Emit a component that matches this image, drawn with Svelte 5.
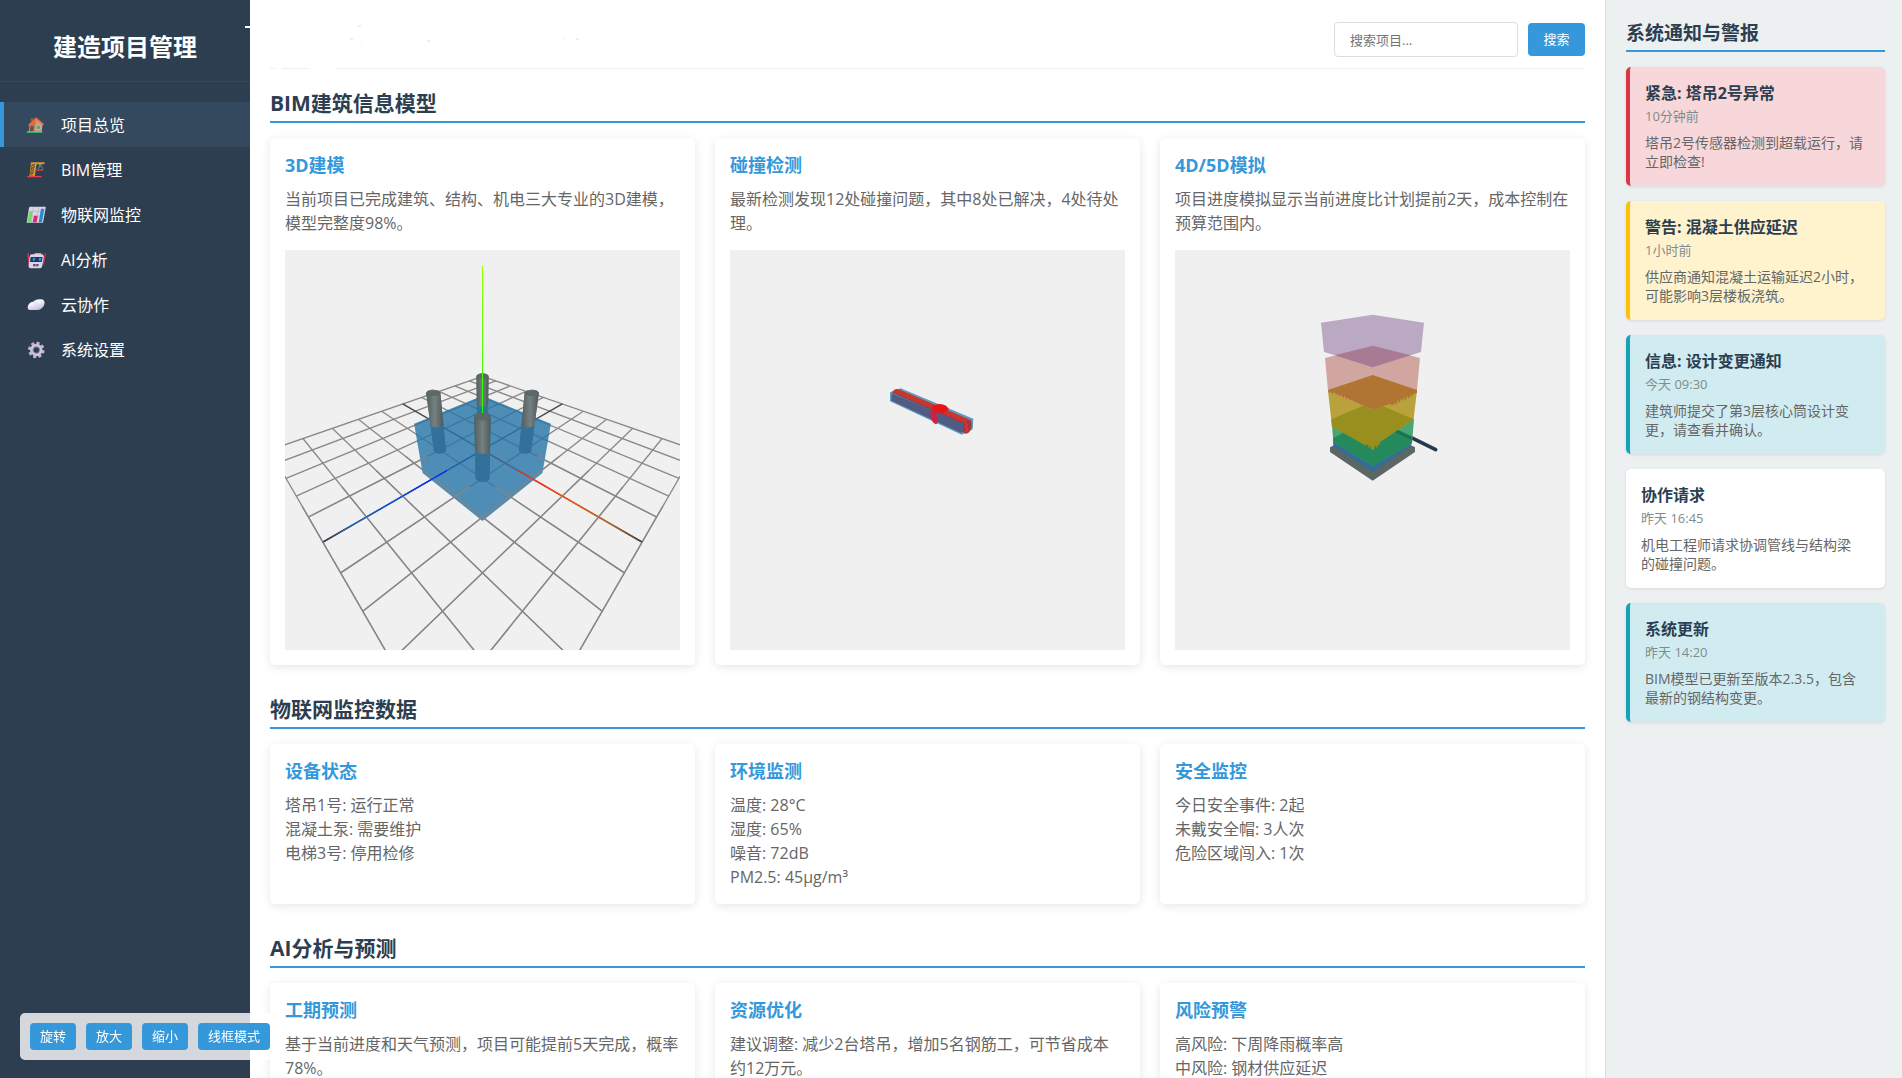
<script>
  const navItems = [
    { id: 'home', label: '项目总览' },
    { id: 'crane', label: 'BIM管理' },
    { id: 'chart', label: '物联网监控' },
    { id: 'robot', label: 'AI分析' },
    { id: 'cloud', label: '云协作' },
    { id: 'gear', label: '系统设置' }
  ];
  let active = $state('home');

  const sections = [
    {
      title: 'BIM建筑信息模型',
      cards: [
        { title: '3D建模', lines: ['当前项目已完成建筑、结构、机电三大专业的3D建模，模型完整度98%。'], view: 'model' },
        { title: '碰撞检测', lines: ['最新检测发现12处碰撞问题，其中8处已解决，4处待处理。'], view: 'clash' },
        { title: '4D/5D模拟', lines: ['项目进度模拟显示当前进度比计划提前2天，成本控制在预算范围内。'], view: 'phases' }
      ]
    },
    {
      title: '物联网监控数据',
      cards: [
        { title: '设备状态', lines: ['塔吊1号: 运行正常', '混凝土泵: 需要维护', '电梯3号: 停用检修'] },
        { title: '环境监测', lines: ['温度: 28°C', '湿度: 65%', '噪音: 72dB', 'PM2.5: 45μg/m³'] },
        { title: '安全监控', lines: ['今日安全事件: 2起', '未戴安全帽: 3人次', '危险区域闯入: 1次'] }
      ]
    },
    {
      title: 'AI分析与预测',
      cards: [
        { title: '工期预测', lines: ['基于当前进度和天气预测，项目可能提前5天完成，概率78%。'] },
        { title: '资源优化', lines: ['建议调整: 减少2台塔吊，增加5名钢筋工，可节省成本约12万元。'] },
        { title: '风险预警', lines: ['高风险: 下周降雨概率高', '中风险: 钢材供应延迟'] }
      ]
    }
  ];

  const notices = [
    { kind: 'urgent', title: '紧急: 塔吊2号异常', time: '10分钟前', text: '塔吊2号传感器检测到超载运行，请立即检查!' },
    { kind: 'warning', title: '警告: 混凝土供应延迟', time: '1小时前', text: '供应商通知混凝土运输延迟2小时，可能影响3层楼板浇筑。' },
    { kind: 'info', title: '信息: 设计变更通知', time: '今天 09:30', text: '建筑师提交了第3层核心筒设计变更，请查看并确认。' },
    { kind: 'plain', title: '协作请求', time: '昨天 16:45', text: '机电工程师请求协调管线与结构梁的碰撞问题。' },
    { kind: 'info', title: '系统更新', time: '昨天 14:20', text: 'BIM模型已更新至版本2.3.5，包含最新的钢结构变更。' }
  ];

  const tools = ['旋转', '放大', '缩小', '线框模式'];

  // Perspective camera at (5,5,5) looking at the origin, 75 degree field of view.
  const focal = 200 / Math.tan((37.5 * Math.PI) / 180);
  function project(x, y, z) {
    const depth = Math.sqrt(75) - (x + y + z) / Math.sqrt(3);
    return [
      197.5 + (((x - z) / Math.SQRT2) * focal) / depth,
      200 - (((2 * y - x - z) / Math.sqrt(6)) * focal) / depth
    ];
  }
  const poly = (...pts) => pts.map((p) => project(...p).map((n) => n.toFixed(1)).join(',')).join(' ');
  function seg(a, b) {
    const [x1, y1] = project(...a);
    const [x2, y2] = project(...b);
    return { x1, y1, x2, y2 };
  }

  const grid = [];
  const frontGrid = [];
  for (let i = -5; i <= 5; i++) {
    const tone = i === 0 ? '#444' : '#888';
    grid.push({ ...seg([i, 0, -5], [i, 0, 5]), tone }, { ...seg([-5, 0, i], [5, 0, i]), tone });
    const from = i > 1.5 ? -1.5 : 1.5;
    if (i !== 0 && i >= -1) {
      frontGrid.push({ ...seg([i, 0, from], [i, 0, 5]), tone }, { ...seg([from, 0, i], [5, 0, i]), tone });
    }
  }

  const s = 1.5;
  const box = poly([-s, 1, -s], [s, 1, -s], [s, -1, -s], [s, -1, s], [-s, -1, s], [-s, 1, s]);

  function column(cx, cz) {
    const ring = (y) =>
      Array.from({ length: 24 }, (_, k) => {
        const t = (k / 24) * Math.PI * 2;
        return [cx + 0.2 * Math.cos(t), y, cz + 0.2 * Math.sin(t)];
      });
    const shape = (y0, y1) => {
      const lo = ring(y0).map((p) => project(...p));
      const hi = ring(y1).map((p) => project(...p));
      const ext = (r, f) => r.reduce((m, p) => (f(p[0], m[0]) ? p : m));
      const lt = (a, b) => a < b;
      const gt = (a, b) => a > b;
      const hl = ext(hi, lt), hr = ext(hi, gt), ll = ext(lo, lt), lr = ext(lo, gt);
      const rx = (lr[0] - ll[0]) / 2;
      const hx = (hr[0] - hl[0]) / 2;
      return `M${hl} A${hx} ${hx * 0.5} 0 0 1 ${hr} L${lr} A${rx} ${rx * 0.5} 0 0 1 ${ll} Z`;
    };
    return { body: shape(0, 2), upper: shape(1, 2), lower: shape(0, 1), cap: poly(...ring(2)) };
  }
  const columns = [column(-1, -1), column(-1, 1), column(1, -1), column(1, 1)];

  const xAxis = seg([0, 0, 0], [5, 0, 0]);
  const zAxis = seg([0, 0, 0], [0, 0, 5]);
  const xFront = seg([s, 0, 0], [5, 0, 0]);
  const zFront = seg([0, 0, s], [0, 0, 5]);
</script>

{#snippet icon(id)}
  <svg class="icon" viewBox="0 0 60 54" aria-hidden="true">
    {#if id === 'home'}
      <path d="M15 6h8l-2 10h-8z" fill="#8d5a3c" />
      <path d="M32 6 50 24 47 48H8L11 25z" fill="#d59a6c" />
      <path d="M32 6 18 22 11 26 9 48h16l3-25z" fill="#b87a50" />
      <path d="M6 27 30 4 54 24 52 28 32 11 10 30z" fill="#ef6540" />
      <path d="M14 31h9l-2 16h-9z" fill="#70463b" />
      <path d="M32 28h12l-2 12H30z" fill="#25a8ea" stroke="#f1b487" stroke-width="2" />
      <path d="M3 46h46l-1 4H2z" fill="#3bd57b" />
    {:else if id === 'crane'}
      <path d="M15 4h41l-1 6H32l-6 38H10z" fill="#d99a31" />
      <path d="m17 10 10 7-13 7 10 8-13 6 10 8M27 9 15 17l9 8-11 7 9 7" stroke="#654833" stroke-width="3" fill="none" />
      <path d="M42 9 37 24M43 9l8 15M42 9v10" stroke="#8ea1b1" stroke-width="2" fill="none" />
      <path d="M29 24h23v6H28z" fill="#a34143" />
      <path d="M5 45h42l-1 4H2z" fill="#e84251" />
    {:else if id === 'chart'}
      <path d="M11 2h47q2 0 1 4l-8 44H2L9 5z" fill="#dcd5e6" />
      <path d="M22 4 16 48M38 4 31 48M8 16h48M6 30h44" stroke="#b8b1c4" stroke-width="2" />
      <path d="M10 17h10l-5 32H4z" fill="#75da63" />
      <path d="M24 29h11l-3 20H20z" fill="#d92970" />
      <path d="M45 8h10l-7 41H38z" fill="#258bd1" />
    {:else if id === 'robot'}
      <path d="M5 7v12l3 24 6-17zM59 7l-6 20-3 18 5-8z" fill="#d7345d" />
      <path d="M7 5v17M58 5l-3 17" stroke="#d7345d" stroke-width="3" />
      <path d="M26 6h20l-2 7H24z" fill="#eca72c" />
      <path d="M17 10h32q6 3 4 13l-5 24q-1 5-8 5H16Q6 52 8 41l3-24q1-6 6-7z" fill="#ded2ec" />
      <path d="M14 18h36l-3 15H12z" fill="#263455" />
      <path d="M21 21h7l-2 8h-6zM39 21h7l-2 8h-6z" fill="#23a1ea" />
      <path d="M22 39h16l-1 7H21z" fill="#503d60" />
      <path d="M26 42h8" stroke="#eee" stroke-width="2" />
    {:else if id === 'cloud'}
      <path d="M22 17c4-6 14-9 25-7 9 2 11 11 6 20-4 7-10 12-19 12H14C5 42 4 36 6 29c3-8 9-12 16-12z" fill="url(#cloudFill)" />
      <path d="M22 17c9 1 11 5 9 13" stroke="#d1cce5" stroke-width="2" fill="none" />
    {:else}
      <g transform="rotate(14 31 27)" fill="#beb3cd">
        {#each [0, 45, 90, 135] as a}
          <rect x="26" y="2" width="10" height="50" rx="3" transform="rotate({a} 31 27)" />
        {/each}
        <circle cx="31" cy="27" r="18" fill="#cfc5dc" />
        <circle cx="31" cy="27" r="11" fill="#8e849f" />
        <circle cx="31" cy="27" r="8" fill="#2d3d50" />
      </g>
    {/if}
  </svg>
{/snippet}

{#snippet modelView()}
  <svg class="viewer" viewBox="0 0 395 400" preserveAspectRatio="xMidYMid slice" role="img" aria-label="3D建模">
    <defs>
      <linearGradient id="steel">
        <stop offset="0" stop-color="#535f5f" />
        <stop offset="0.5" stop-color="#758180" />
        <stop offset="1" stop-color="#4e5a5a" />
      </linearGradient>
      <linearGradient id="red" gradientUnits="userSpaceOnUse" x1="197" y1="200" x2="357" y2="292">
        <stop offset="0" stop-color="#f00" />
        <stop offset="0.55" stop-color="#f4581c" />
        <stop offset="0.8" stop-color="#b56a2a" />
        <stop offset="1" stop-color="#444" />
      </linearGradient>
      <linearGradient id="blue" gradientUnits="userSpaceOnUse" x1="197" y1="200" x2="38" y2="292">
        <stop offset="0" stop-color="#00f" />
        <stop offset="0.55" stop-color="#1450e6" />
        <stop offset="0.8" stop-color="#2a6ba8" />
        <stop offset="1" stop-color="#444" />
      </linearGradient>
      <linearGradient id="green" gradientUnits="userSpaceOnUse" x1="0" y1="200" x2="0" y2="16">
        <stop offset="0" stop-color="#0f0" />
        <stop offset="1" stop-color="#9f0" />
      </linearGradient>
    </defs>
    <g class="lines">
      {#each grid as { tone, ...l }}
        <line {...l} stroke={tone} />
      {/each}
      <line {...xAxis} stroke="url(#red)" />
      <line {...zAxis} stroke="url(#blue)" />
    </g>
    {#each columns as c}
      <path d={c.body} fill="url(#steel)" />
    {/each}
    <polygon points={box} fill="#2674a6" fill-opacity="0.8" />
    {#each columns as c}
      <path d={c.lower} fill="#34719a" />
    {/each}
    <g class="lines">
      {#each frontGrid as { tone, ...l }}
        <line {...l} stroke={tone} />
      {/each}
      <line {...xFront} stroke="url(#red)" />
      <line {...zFront} stroke="url(#blue)" />
    </g>
    {#each columns as c}
      <path d={c.upper} fill="url(#steel)" />
      <polygon points={c.cap} fill="#5c6867" />
    {/each}
    <path d="M197.5 163V16" stroke="url(#green)" />
  </svg>
{/snippet}

{#snippet clashView()}
  <svg class="viewer" viewBox="0 0 395 400" preserveAspectRatio="xMidYMid slice" role="img" aria-label="碰撞检测">
    <g transform="translate(130 120) scale(0.33333)">
      <polygon points="90,67 122,55 340,146 338,178 305,194 90,94" fill="#5c9cc4" />
      <path d="M95 70 312 160V186L302 188 94 92Z" fill="#505c82" />
      <path d="M97 67Q104 54 116 58L332 150Q336 160 316 162Z" fill="#cb352d" />
      <path d="M98 67 316 162" stroke="#8b3648" stroke-width="3" />
      <path d="M312 160Q322 148 333 152 338 166 331 182 323 194 312 190 305 180 312 160Z" fill="#a8343f" />
      <path d="m314 158 8 6-6 8 8 5-8 10" stroke="#d83c35" stroke-width="4" fill="none" />
      <path d="M214 120q10-10 20-6 2 10-5 18 6 14 3 28-3 5-10 0-14-15-11-30z" fill="#c92542" />
      <path d="M215 113q4-10 25-11 20 2 26 14-4 11-20 14-19-1-31-17z" fill="#dc1a22" />
      <path d="M217 112q20-8 41 2 4 7-9 12-15-1-32-14z" fill="#f30f10" />
    </g>
  </svg>
{/snippet}

{#snippet phasesView()}
  <svg class="viewer" viewBox="0 0 395 400" preserveAspectRatio="xMidYMid slice" role="img" aria-label="4D/5D模拟">
    <g transform="translate(125 50) scale(0.33333)">
      <path d="M290 391 407 449" stroke="#253a4a" stroke-width="11" stroke-linecap="round" />
      <polygon points="90,442 218,380 345,442 345,456 218,542 90,456" fill="#5b6665" />
      <polygon points="99,420 218,352 336,410 333,438 218,516 100,438" fill="#326e96" />
      <polygon points="96,378 218,305 342,358 336,430 218,497 100,425" fill="#4aa573" />
      <polygon points="99,414 218,353 336,409 336,430 218,497 100,425" fill="#258a5b" />
      <path d="m288 389 46 21v9l-52-24z" fill="#1d6f55" />
      <polygon points="84,272 218,225 351,270 341,358 218,440 96,380" fill="#b9a23b" />
      <path d="M94 358 218 305 341 358 240 426l-3 14-3-8-5 14-3-12-4 16-4-3-4 4-3-14-4 8-4-14-5 6L96 380Z" fill="#998f1f" />
      <polygon points="75,174 218,137 360,174 351,270 218,329 84,272" fill="#d1a6a0" />
      <path d="M84 270 218 225 351 270V278l-14 6-2 8-4-6-5 10-4-8-5 14-4-11-5 12-4-8-6 15-4-9-6 14-3-7-9 9-4-6L218 329l-72-31-4-4-4 4-4-9-5 5-6-9-4 5-5-8-5 3-6-8-4 5-8-7-4 4Z" fill="#b07533" />
      <polygon points="63,68 218,44 372,68 363,156 332,166 218,202 106,166 72,156" fill="#bba9c4" />
      <polygon points="104,166 218,137 332,166 218,202" fill="#a97a94" />
    </g>
  </svg>
{/snippet}

<svg class="defs" width="0" height="0" aria-hidden="true">
  <linearGradient id="cloudFill" x1="0" y1="0" x2="0.5" y2="1">
    <stop offset="0" stop-color="#fff" />
    <stop offset="0.5" stop-color="#f1eff8" />
    <stop offset="1" stop-color="#c6c0df" />
  </linearGradient>
</svg>

<div class="layout">
  <nav class="sidebar">
    <h1>建造项目管理</h1>
    <ul>
      {#each navItems as item}
        <li>
          <a
            href="#{item.id}"
            class:active={active === item.id}
            onclick={(e) => {
              e.preventDefault();
              active = item.id;
            }}
          >
            {@render icon(item.id)}
            <span>{item.label}</span>
          </a>
        </li>
      {/each}
    </ul>
  </nav>

  <main>
    <header>
      <svg class="glints" viewBox="0 0 400 60" aria-hidden="true">
        <path d="M9 12h7v2H9z" fill="#fff" />
        <path d="M122 12h3M114 25h3M191 27h3M340 25h3" stroke="#ddd" />
        <path d="M37 34h1M217 15h1M327 25h1M125 31h1" stroke="#e4e4e4" />
        <path d="M73 54h28M39 54h7" stroke="#fff" stroke-width="3" />
      </svg>
      <form class="search" onsubmit={(e) => e.preventDefault()}>
        <input type="text" placeholder="搜索项目..." aria-label="搜索项目" />
        <button type="submit">搜索</button>
      </form>
    </header>

    {#each sections as section}
      <section>
        <h2>{section.title}</h2>
        <div class="cards">
          {#each section.cards as card}
            <article class="card">
              <h3>{card.title}</h3>
              {#each card.lines as line}
                <p>{line}</p>
              {/each}
              {#if card.view === 'model'}
                {@render modelView()}
              {:else if card.view === 'clash'}
                {@render clashView()}
              {:else if card.view === 'phases'}
                {@render phasesView()}
              {/if}
            </article>
          {/each}
        </div>
      </section>
    {/each}
  </main>

  <aside>
    <h2>系统通知与警报</h2>
    {#each notices as n}
      <article class="notice {n.kind}">
        <h4>{n.title}</h4>
        <time>{n.time}</time>
        <p>{n.text}</p>
      </article>
    {/each}
  </aside>

  <div class="toolbar">
    {#each tools as t}
      <button type="button">{t}</button>
    {/each}
  </div>
</div>

<style>
  :global(body) {
    margin: 0;
    overflow: hidden;
  }
  .layout {
    display: grid;
    grid-template-columns: 250px minmax(0, 1fr) 297px;
    grid-template-rows: minmax(0, 1fr);
    height: 100vh;
    overflow: hidden;
    background: #fff;
    color: #333;
    font: 16px/24px 'Open Sans', 'Noto Sans CJK SC', sans-serif;
  }
  .layout * {
    box-sizing: border-box;
  }
  h1,
  h2,
  h3,
  h4,
  p,
  ul {
    margin: 0;
    padding: 0;
  }
  .defs {
    position: absolute;
  }
  button,
  input {
    font: 13px/17px 'Open Sans', 'Noto Sans CJK SC', sans-serif;
  }
  button {
    border: 0;
    border-radius: 4px;
    background: #3498db;
    color: #fff;
    cursor: pointer;
  }

  .sidebar {
    background: #2c3e50;
    color: #fff;
  }
  .sidebar h1 {
    padding: 31px 20px 18px;
    border-bottom: 1px solid #34495e;
    margin-bottom: 20px;
    font-size: 24px;
    line-height: 32px;
    text-align: center;
  }
  .sidebar ul {
    list-style: none;
  }
  .sidebar a {
    display: flex;
    align-items: center;
    gap: 15px;
    height: 45px;
    padding: 0 20px 0 22px;
    border-left: 4px solid transparent;
    color: #fff;
    text-decoration: none;
  }
  .sidebar a.active {
    background: #34495e;
    border-left-color: #3498db;
  }
  .icon {
    width: 20px;
    height: 18px;
    flex: none;
  }

  main {
    padding: 20px;
  }
  header {
    position: relative;
    display: flex;
    justify-content: flex-end;
    height: 49px;
    border-bottom: 1px solid #eee;
    margin-bottom: 20px;
  }
  .glints {
    position: absolute;
    left: -34px;
    top: -6px;
    width: 400px;
    height: 60px;
    pointer-events: none;
  }
  .search {
    display: flex;
    align-items: center;
    gap: 10px;
    height: 39px;
  }
  .search input {
    width: 184px;
    height: 35px;
    padding: 0 15px;
    border: 1px solid #ddd;
    border-radius: 4px;
    color: #333;
  }
  .search input::placeholder {
    color: #757575;
  }
  .search button {
    height: 33px;
    width: 57px;
  }

  section {
    margin-bottom: 30px;
  }
  h2 {
    padding: 1px 0 4px;
    border-bottom: 2px solid #3498db;
    margin-bottom: 15px;
    color: #2c3e50;
    font-size: 21px;
    line-height: 27px;
  }
  .cards {
    display: grid;
    grid-template-columns: repeat(3, minmax(0, 1fr));
    gap: 20px;
  }
  .card {
    padding: 15px;
    border-radius: 5px;
    background: #fff;
    box-shadow: 0 2px 10px rgba(0, 0, 0, 0.1);
  }
  .card h3 {
    margin-bottom: 10px;
    color: #3498db;
    font-size: 18px;
    line-height: 24px;
  }
  .card p {
    padding-right: 1px;
    color: #666;
  }
  .viewer {
    display: block;
    width: 100%;
    height: 400px;
    margin-top: 15px;
    background: #f0f0f0;
  }
  .lines {
    stroke-width: 1.3;
  }

  aside {
    padding: 20px 17px 20px 20px;
    border-left: 1px solid #ddd;
    background: #ecf0f1;
    overflow: hidden;
  }
  aside h2 {
    font-size: 19px;
    line-height: 25px;
  }
  .notice {
    padding: 15px;
    border-radius: 5px;
    margin-bottom: 15px;
    background: #fff;
    box-shadow: 0 1px 3px rgba(0, 0, 0, 0.1);
  }
  .notice h4 {
    margin-bottom: 3px;
    color: #2c3e50;
    font-size: 16px;
    line-height: 23px;
  }
  .notice time {
    display: block;
    margin-bottom: 8px;
    color: #7f8c8d;
    font-size: 13px;
    line-height: 17px;
  }
  .notice p {
    padding-right: 6px;
    color: #666;
    font-size: 14px;
    line-height: 19px;
  }
  .urgent {
    border-left: 4px solid #dc3545;
    background: #f8d7da;
  }
  .warning {
    border-left: 4px solid #ffc107;
    background: #fff3cd;
  }
  .info {
    border-left: 4px solid #17a2b8;
    background: #d1ecf1;
  }

  .toolbar {
    position: fixed;
    left: 20px;
    bottom: 18px;
    display: flex;
    gap: 10px;
    padding: 10px;
    border-radius: 5px;
    background: rgba(255, 255, 255, 0.8);
  }
  .toolbar button {
    height: 27px;
    padding: 0 10px;
  }
</style>
